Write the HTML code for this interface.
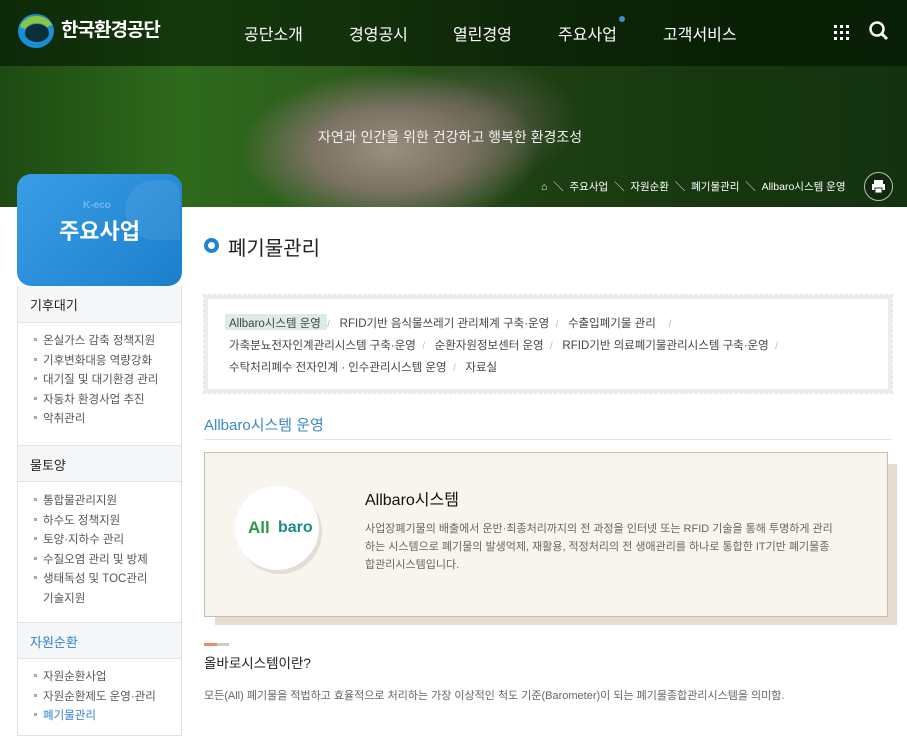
<!DOCTYPE html>
<html><head><meta charset="utf-8"><style>
*{margin:0;padding:0;box-sizing:border-box}
body{width:907px;height:728px;overflow:hidden;position:relative;background:#fff;font-family:"Liberation Sans","Noto Sans CJK KR",sans-serif;color:#333}
.a{position:absolute;white-space:nowrap}
#hero{position:absolute;left:0;top:0;width:907px;height:207px;background:
radial-gradient(ellipse 150px 80px at 390px 150px,#9a8f80 0%,#7d7365 50%,rgba(60,60,40,0) 100%),
radial-gradient(ellipse 100px 60px at 480px 120px,#5a5a4a 0%,rgba(40,50,30,0) 100%),
linear-gradient(90deg,#1d4a12 0%,#2f6a1c 20%,#2a5a1a 40%,#1d3f12 60%,#16370e 80%,#143210 100%)}
#hdr{position:absolute;left:0;top:0;width:907px;height:66px;background:rgba(0,15,0,.55)}
.nav{color:#fff;font-size:16px;top:21px}
.side{position:absolute;left:17px;top:286px;width:165px;height:450px;border:1px solid #e0e0e0;border-top:none}
.sh{position:absolute;left:0;width:163px;height:37px;background:#f5f6f8;border-bottom:1px solid #e3e3e3;font-size:13px;color:#222;padding:9px 12px}
.sl{position:absolute;left:25px;font-size:11.5px;color:#555;line-height:19.5px}
.sl div:before{content:"";display:inline-block;width:3px;height:3px;background:#aaa;margin:0 6px 3px -9px}
.tab{font-size:11.5px;color:#444}
.sep{color:#bbb;font-size:10px}
</style></head><body>
<div id="hero"></div>
<div id="hdr"></div>
<svg class="a" style="left:17px;top:11px" width="40" height="38" viewBox="0 0 40 38"><ellipse cx="19" cy="20" rx="18" ry="17" fill="#1a8fd8"/><path d="M3 16 A17 15 0 0 1 35 14 L30 16 A13 10 0 0 0 8 18Z" fill="#8cc63f"/><ellipse cx="20" cy="22" rx="12" ry="9" fill="#0d2f3a"/></svg>
<div class="a" style="left:61px;top:15px;color:#fff;font-size:19px;font-weight:bold;letter-spacing:-1px">한국환경공단</div>
<div class="a nav" style="left:244px">공단소개</div>
<div class="a nav" style="left:349px">경영공시</div>
<div class="a nav" style="left:453px">열린경영</div>
<div class="a nav" style="left:558px">주요사업</div>
<div class="a" style="left:619px;top:16px;width:6px;height:6px;border-radius:3px;background:#3a8fd0"></div>
<div class="a nav" style="left:663px">고객서비스</div>
<svg class="a" style="left:834px;top:25px" width="16" height="16"><g fill="#fff"><rect x="0" y="0" width="3" height="3"/><rect x="6" y="0" width="3" height="3"/><rect x="12" y="0" width="3" height="3"/><rect x="0" y="6" width="3" height="3"/><rect x="6" y="6" width="3" height="3"/><rect x="12" y="6" width="3" height="3"/><rect x="0" y="12" width="3" height="3"/><rect x="6" y="12" width="3" height="3"/><rect x="12" y="12" width="3" height="3"/></g></svg>
<svg class="a" style="left:869px;top:21px" width="20" height="20"><circle cx="8" cy="8" r="6.5" fill="none" stroke="#fff" stroke-width="2.5"/><line x1="13" y1="13" x2="18" y2="18" stroke="#fff" stroke-width="3"/></svg>
<div class="a" style="left:318px;top:127px;color:#f0f0f0;font-size:14px">자연과 인간을 위한 건강하고 행복한 환경조성</div>
<div class="a" style="left:541px;top:179px;color:#fff;font-size:10.5px">⌂ &nbsp;＼&nbsp; 주요사업 &nbsp;＼&nbsp; 자원순환 &nbsp;＼&nbsp; 폐기물관리 &nbsp;＼&nbsp; Allbaro시스템 운영</div>
<div class="a" style="left:864px;top:172px;width:29px;height:29px;border-radius:15px;border:1px solid #bbb;background:rgba(0,0,0,.2)"></div>
<svg class="a" style="left:871px;top:179px" width="15" height="15"><rect x="3" y="1" width="9" height="4" fill="#fff"/><rect x="1" y="5" width="13" height="6" fill="#fff"/><rect x="4" y="9" width="7" height="5" fill="#fff" stroke="#333" stroke-width="1"/></svg>
<div class="a" style="left:17px;top:174px;width:165px;height:112px;border-radius:14px;background:linear-gradient(135deg,#3a9de6,#1b7fcc)"></div>
<div class="a" style="left:125px;top:180px;width:55px;height:60px;border-radius:30px 14px 0 30px;background:rgba(255,255,255,.08)"></div>
<div class="a" style="left:83px;top:200px;font-size:10px;color:rgba(255,255,255,.35);font-weight:bold">K-eco</div>
<div class="a" style="left:59px;top:214px;font-size:22px;color:#fff;font-weight:bold">주요사업</div>
<div class="side">
<div class="sh" style="top:0">기후대기</div>
<div class="sl" style="top:46px"><div>온실가스 감축 정책지원</div><div>기후변화대응 역량강화</div><div>대기질 및 대기환경 관리</div><div>자동차 환경사업 추진</div><div>악취관리</div></div>
<div class="sh" style="top:159px;border-top:1px solid #e3e3e3">물토양</div>
<div class="sl" style="top:206px"><div>통합물관리지원</div><div>하수도 정책지원</div><div>토양·지하수 관리</div><div>수질오염 관리 및 방제</div><div>생태독성 및 TOC관리<br>기술지원</div></div>
<div class="sh" style="top:336px;border-top:1px solid #e3e3e3;color:#2a82d0">자원순환</div>
<div class="sl" style="top:382px"><div>자원순환사업</div><div>자원순환제도 운영·관리</div><div style="color:#2a82d0">폐기물관리</div></div>
</div>
<div class="a" style="left:204px;top:238px;width:15px;height:15px;border-radius:8px;border:4px solid #1b86d6"></div>
<div class="a" style="left:228px;top:232px;font-size:20px;color:#222">폐기물관리</div>
<div class="a" style="left:204px;top:295px;width:688px;height:98px;border:4px solid #ececec;background:#fff;outline:1px dashed #e6e6e6"></div>
<div class="a" style="left:225px;top:314px;width:102px;height:16px;background:#dcebe6"></div>
<div class="a tab" style="left:229px;top:315px">Allbaro시스템 운영 &nbsp;<span class="sep">/</span> &nbsp;&nbsp;RFID기반 음식물쓰레기 관리체계 구축·운영 &nbsp;<span class="sep">/</span> &nbsp;&nbsp;수출입폐기물 관리 &nbsp;&nbsp;&nbsp;<span class="sep">/</span></div>
<div class="a tab" style="left:229px;top:337px">가축분뇨전자인계관리시스템 구축·운영 &nbsp;<span class="sep">/</span> &nbsp;&nbsp;순환자원정보센터 운영 &nbsp;<span class="sep">/</span> &nbsp;&nbsp;RFID기반 의료폐기물관리시스템 구축·운영 &nbsp;<span class="sep">/</span></div>
<div class="a tab" style="left:229px;top:359px">수탁처리폐수 전자인계 · 인수관리시스템 운영 &nbsp;<span class="sep">/</span> &nbsp;&nbsp;자료실</div>
<div class="a" style="left:204px;top:414px;font-size:15px;color:#3a88c8">Allbaro시스템 운영</div>
<div class="a" style="left:204px;top:439px;width:688px;height:1px;background:#dde3ea"></div>
<div class="a" style="left:215px;top:464px;width:682px;height:161px;background:#e6dccd"></div>
<div class="a" style="left:204px;top:452px;width:684px;height:165px;background:#f8f4ee;border:1px solid #c9bdae"></div>
<div class="a" style="left:235px;top:486px;width:84px;height:84px;border-radius:42px;background:#fff;box-shadow:3px 4px 0 #e3ddd4"></div>
<div class="a" style="left:248px;top:518px;font-size:17px;font-weight:bold;color:#2a9a4a">All</div>
<div class="a" style="left:278px;top:519px;font-size:16px;font-weight:bold;color:#1a8a8a">baro</div>
<div class="a" style="left:365px;top:486px;font-size:16px;color:#111">Allbaro시스템</div>
<div class="a" style="left:365px;top:520px;font-size:11px;color:#666;line-height:18px;white-space:normal;width:472px">사업장폐기물의 배출에서 운반·최종처리까지의 전 과정을 인터넷 또는 RFID 기술을 통해 투명하게 관리하는 시스템으로 폐기물의 발생억제, 재활용, 적정처리의 전 생애관리를 하나로 통합한 IT기반 폐기물종합관리시스템입니다.</div>
<div class="a" style="left:204px;top:643px;width:13px;height:3px;background:#f08a6a"></div>
<div class="a" style="left:217px;top:643px;width:12px;height:3px;background:#ccc"></div>
<div class="a" style="left:204px;top:652px;font-size:13.5px;color:#222">올바로시스템이란?</div>
<div class="a" style="left:204px;top:687px;font-size:11px;color:#666">모든(All) 폐기물을 적법하고 효율적으로 처리하는 가장 이상적인 척도 기준(Barometer)이 되는 폐기물종합관리시스템을 의미함.</div>
</body></html>
